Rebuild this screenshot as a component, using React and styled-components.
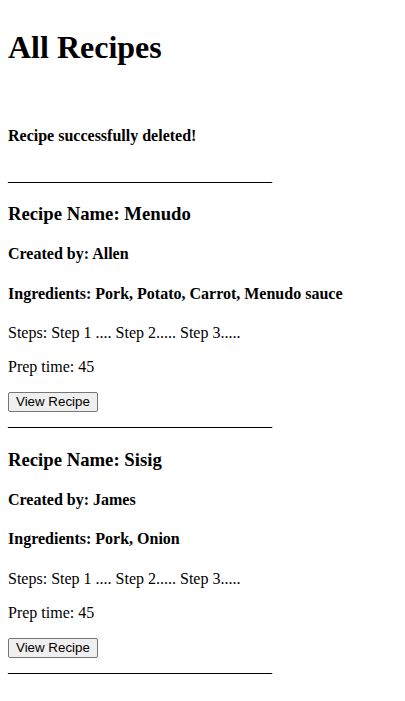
import React from 'react';
import styled, { createGlobalStyle } from 'styled-components';

const GlobalStyle = createGlobalStyle`
  body {
    margin: 0;
    background: #fff;
    color: #000;
    font-family: "Liberation Serif", "Times New Roman", serif;
    font-size: 16px;
    line-height: 18px;
  }
`;

const Page = styled.div`
  padding: 8px;
`;

const Title = styled.h1`
  font-size: 32px;
  line-height: 37px;
  font-weight: bold;
  margin: 21.44px 0 0;
`;

const Notice = styled.h4`
  font-size: 16px;
  line-height: 18px;
  font-weight: bold;
  margin: 60.8px 0 21.28px;
`;

const Divider = styled.div`
  font-size: 16px;
  line-height: 18px;
  white-space: nowrap;
`;

const Recipe = styled.div``;

const Name = styled.h3`
  font-size: 18.72px;
  line-height: 21px;
  font-weight: bold;
  margin: 18.72px 0;
`;

const Meta = styled.h4`
  font-size: 16px;
  line-height: 18px;
  font-weight: bold;
  margin: 21.28px 0;
`;

const Detail = styled.p`
  font-size: 16px;
  line-height: 18px;
  margin: 16px 0;
`;

const Actions = styled.div`
  display: flex;
`;

const Button = styled.button`
  font-family: "Liberation Sans", Arial, sans-serif;
  font-size: 13.33px;
  line-height: 16px;
  height: 20px;
  color: #000;
  background: #efefef;
  border: 1px solid #767676;
  border-radius: 2px;
  padding: 1px 7px;
  cursor: pointer;
`;

const recipes = [
  {
    name: 'Menudo',
    author: 'Allen',
    ingredients: 'Pork, Potato, Carrot, Menudo sauce',
    steps: 'Step 1 .... Step 2..... Step 3.....',
    prep: 45,
  },
  {
    name: 'Sisig',
    author: 'James',
    ingredients: 'Pork, Onion',
    steps: 'Step 1 .... Step 2..... Step 3.....',
    prep: 45,
  },
];

const line = '_'.repeat(33);

const App = () => {
  return (
    <>
      <GlobalStyle />
      <Page>
        <Title>All Recipes</Title>
        <Notice>Recipe successfully deleted!</Notice>
        <Divider>{line}</Divider>
        {recipes.map((r) => (
          <Recipe key={r.name}>
            <Name>Recipe Name: {r.name}</Name>
            <Meta>Created by: {r.author}</Meta>
            <Meta>Ingredients: {r.ingredients}</Meta>
            <Detail>Steps: {r.steps}</Detail>
            <Detail>Prep time: {r.prep}</Detail>
            <Actions>
              <Button>View Recipe</Button>
            </Actions>
            <Divider>{line}</Divider>
          </Recipe>
        ))}
      </Page>
    </>
  );
};

export default App;
